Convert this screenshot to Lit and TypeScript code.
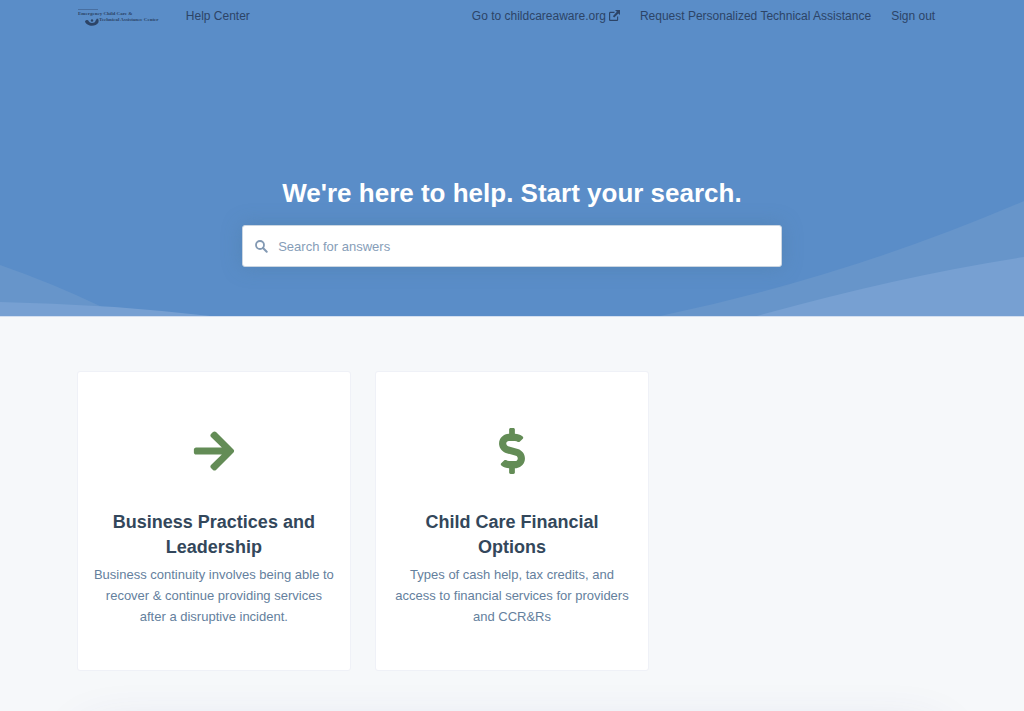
import { LitElement, html, svg, css } from "lit";
import { customElement, property } from "lit/decorators.js";

const arrowIcon = svg`<path d="M190.500 66.900l22.200-22.200c9.400-9.400 24.600-9.400 33.900 0L441 239c9.400 9.400 9.400 24.600 0 33.900L246.600 467.300c-9.400 9.400-24.600 9.400-33.900 0l-22.200-22.200c-9.500-9.500-9.300-25 .4-34.300L311.400 296H24c-13.300 0-24-10.700-24-24v-32c0-13.300 10.700-24 24-24h287.400L190.900 101.200c-9.800-9.300-10-24.800-.4-34.300z"/>`;
const dollarIcon = svg`<path transform="translate(80 0)" d="M209.200 233.400l-108-31.600C88.700 198.200 80 186.500 80 173.500c0-16.300 13.200-29.500 29.500-29.500h66.300c12.200 0 24.200 3.700 34.200 10.500 6.100 4.100 14.300 3.100 19.500-2l34.800-34c7.100-6.900 6.100-18.400-1.800-24.500C238 74.800 207.400 64.100 176 64V16c0-8.800-7.200-16-16-16h-32c-8.800 0-16 7.200-16 16v48h-2.500C45.800 64-5.400 118.700.5 183.600c4.200 46.100 39.400 83.600 83.800 96.600l102.500 30c12.500 3.700 21.200 15.300 21.200 28.300 0 16.300-13.200 29.500-29.500 29.500h-66.300C100 368 88 364.300 78 357.500c-6.100-4.100-14.300-3.100-19.500 2l-34.800 34c-7.100 6.900-6.100 18.400 1.800 24.500 24.500 19.200 55.100 29.900 86.500 30v48c0 8.800 7.200 16 16 16h32c8.800 0 16-7.200 16-16v-48.200c46.600-.9 90.300-28.600 105.700-72.700 21.500-61.600-14.600-124.800-72.500-141.700z"/>`;

@customElement("topic-card")
export class TopicCard extends LitElement {
  @property() heading = "";
  @property() summary = "";
  @property() icon = "arrow";

  static styles = css`
    :host { display: block; }
    .card {
      box-sizing: border-box;
      display: flex;
      flex-direction: column;
      align-items: center;
      height: 100%;
      padding: 56px 14px 43px;
      background: #fff;
      border: 1px solid #eff1f7;
      border-radius: 3px;
      text-align: center;
      text-decoration: none;
    }
    .icon { display: block; width: 46px; height: 46px; fill: #638c56; margin-bottom: 36px; }
    .heading { margin: 0 0 4px; padding: 0 16px; font-size: 18px; line-height: 25px; font-weight: 700; color: #33475b; }
    .summary { margin: 0; font-size: 13px; line-height: 21px; color: #64809d; }
  `;

  render() {
    return html`<a class="card" href="#">
      <svg class="icon" viewBox="-32 0 512 512" aria-hidden="true">
        ${this.icon === "arrow" ? arrowIcon : dollarIcon}
      </svg>
      <h2 class="heading">${this.heading}</h2>
      <p class="summary">${this.summary}</p>
    </a>`;
  }
}

@customElement("app-root")
export class AppRoot extends LitElement {
  static styles = css`
    :host {
      display: flex;
      flex-direction: column;
      min-height: 100vh;
      background: #f6f8fa;
      font-family: "Liberation Sans", Arial, sans-serif;
      color: #33475b;
    }
    .hero { position: relative; background: #5a8dc8; padding-bottom: 49px; border-bottom: 1px solid #d3dff0; }
    .waves { position: absolute; inset: 0; width: 100%; height: 100%; }
    .inner { position: relative; }
    .wrap { box-sizing: border-box; width: 85%; max-width: 1080px; margin: 0 auto; }
    .bar { display: flex; justify-content: space-between; align-items: center; height: 32px; font-size: 12px; line-height: 16px; }
    .brand, .links { display: flex; align-items: center; }
    .brand { gap: 24px; }
    .links { gap: 20px; padding-right: 12px; }
    .link { color: #2c4467; text-decoration: none; white-space: nowrap; }
    .logo { display: block; width: 85px; height: 20px; }
    .external { width: 11px; height: 11px; margin-left: 3px; vertical-align: -1px; fill: #2c4467; }
    .title { margin: 145px 0 15px; text-align: center; color: #fff; font-size: 26px; line-height: 33px; font-weight: 700; }
    .search {
      box-sizing: border-box;
      display: flex;
      align-items: center;
      gap: 10px;
      width: 62%;
      height: 42px;
      margin: 0 auto;
      padding: 1px 12px 0;
      background: #fff;
      border: 1px solid #cbd6e2;
      border-radius: 3px;
      box-shadow: 0 0 20px rgba(74, 120, 155, 0.4);
    }
    .glass { flex: none; width: 13px; height: 13px; fill: none; stroke: #8299b3; stroke-linecap: round; }
    .field { flex: 1; min-width: 0; padding: 0; border: 0; outline: 0; background: none; font: 13px/20px "Liberation Sans", Arial, sans-serif; color: #33475b; }
    .field::placeholder { color: #869db8; opacity: 1; }
    .topics { display: grid; grid-template-columns: repeat(3, 1fr); gap: 24px; padding-top: 54px; }
    .below { flex: 1; min-height: 32px; overflow: hidden; contain: size; }
    .panel { height: 96px; margin-top: 56px; border-radius: 3px; box-shadow: 0 0 56px -12px rgba(60, 60, 140, 0.2); }
  `;

  render() {
    return html`
      <header class="hero">
        <svg class="waves" viewBox="0 0 1024 316" preserveAspectRatio="none" aria-hidden="true">
          <path fill="#6795ca" d="M0 265Q52 283 102 307L210 316H0zM660 316Q850 276 1024 201V316z" />
          <path fill="#77a0d2" d="M0 302Q105 304 210 316H0zM757 316Q900 276 1024 257V316z" />
        </svg>
        <div class="inner">
          <nav class="wrap bar">
            <div class="brand">
              <a class="link" href="#" aria-label="Emergency Child Care &amp; Technical Assistance Center">
                <svg class="logo" viewBox="0 0 85 20" fill="#2c4467" font-family="Liberation Serif, serif" font-weight="700">
                  <path opacity=".4" d="M1 3h20v1H1z" />
                  <text x="1" y="9" font-size="5">Emergency Child Care &amp;</text>
                  <text x="22" y="15" font-size="5">Technical Assistance Center</text>
                  <path d="M8 15.500c.3-1.300 2.800-2 3.500-.8.300 1.200 1.500 2.300 3.500 2.300s3.200-1 3.500-2.300l1.500-2.200c1.800.4 2 2.300 1.300 4.300-1.300 2-3.700 3-6.300 3-3 0-6.300-1.800-7-4.300z" />
                  <circle cx="15" cy="14.500" r="1.200" />
                </svg>
              </a>
              <a class="link" href="#">Help Center</a>
            </div>
            <div class="links">
              <a class="link" href="#">Go to childcareaware.org<svg class="external" viewBox="0 0 12 12" aria-hidden="true"><path d="M6.500 0H12v5.500L10.200 3.700 5.700 8.200 4.200 6.700 8.600 2zM1.500 2H6v1.200H1.300v7.500h7.500V7H10v3.500c0 .8-.7 1.500-1.500 1.500h-7C.7 12 0 11.300 0 10.500v-7C0 2.700.7 2 1.500 2z" /></svg></a>
              <a class="link" href="#">Request Personalized Technical Assistance</a>
              <a class="link" href="#">Sign out</a>
            </div>
          </nav>
          <div class="wrap">
            <h1 class="title">We're here to help. Start your search.</h1>
            <form class="search" role="search">
              <svg class="glass" viewBox="0 0 13 13" aria-hidden="true"><circle cx="5" cy="5" r="4" stroke-width="1.800" /><path d="M8 8l3.700 3.700" stroke-width="2" /></svg>
              <input class="field" type="search" placeholder="Search for answers" aria-label="Search for answers" />
            </form>
          </div>
        </div>
      </header>
      <main class="wrap topics">
        <topic-card
          icon="arrow"
          heading="Business Practices and Leadership"
          summary="Business continuity involves being able to recover &amp; continue providing services after a disruptive incident."
        ></topic-card>
        <topic-card
          icon="dollar"
          heading="Child Care Financial Options"
          summary="Types of cash help, tax credits, and access to financial services for providers and CCR&amp;Rs"
        ></topic-card>
      </main>
      <div class="below"><div class="wrap panel"></div></div>
    `;
  }
}
